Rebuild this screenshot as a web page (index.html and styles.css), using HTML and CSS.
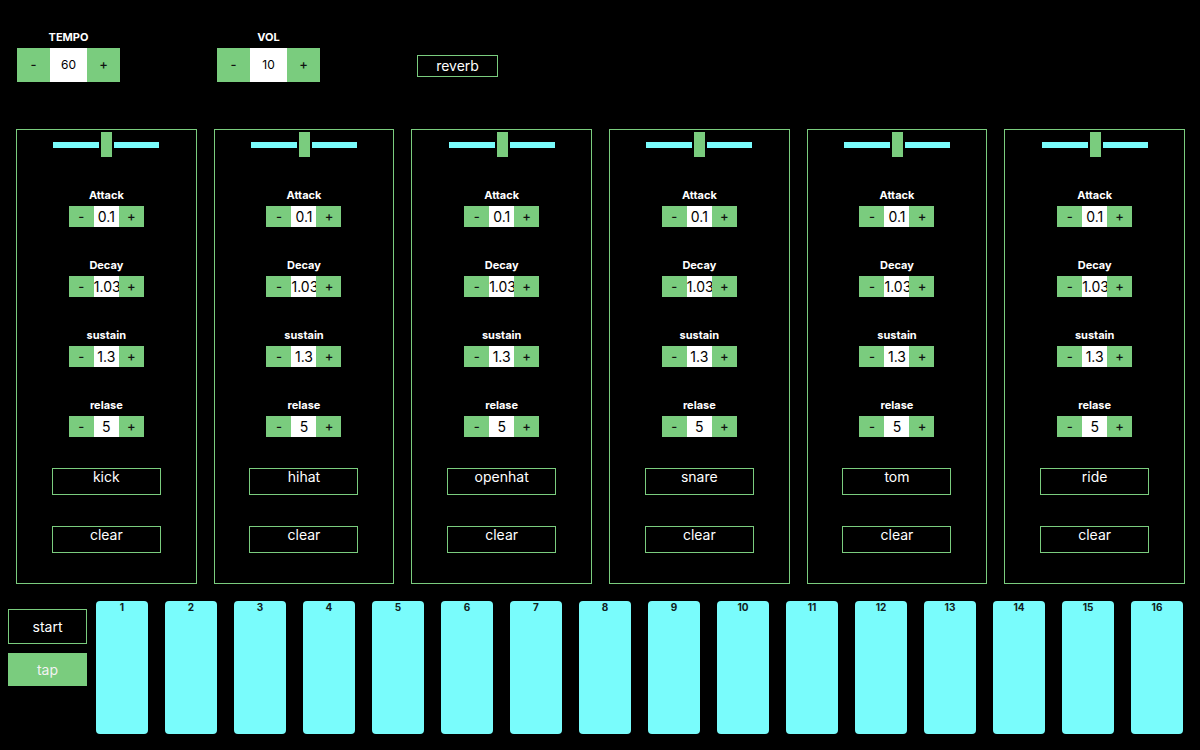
FILE: index.html
```html
<!DOCTYPE html>
<html lang="en">
<head>
	<meta charset="UTF-8">
	<title>Drum Machine</title>
	<link rel="stylesheet" href="styles.css">
</head>

<body>

<div class="master">
	<div class="field">
		<div class="label">TEMPO</div>
		<div class="stepper big">
			<button class="step">-</button>
			<span class="value">60</span>
			<button class="step">+</button>
		</div>
	</div>

	<div class="field">
		<div class="label">VOL</div>
		<div class="stepper big">
			<button class="step">-</button>
			<span class="value">10</span>
			<button class="step">+</button>
		</div>
	</div>

	<button class="outline reverb">reverb</button>
</div>

<div class="channels"></div>

<div class="sequencer">
	<div class="transport">
		<button class="outline start">start</button>
		<button class="tap">tap</button>
	</div>
	<div class="pads"></div>
</div>

<script>
	const channels = document.querySelector('.channels');
	const sounds = ['kick', 'hihat', 'openhat', 'snare', 'tom', 'ride'];
	const envelope = [
		['Attack', '0.1'],
		['Decay', '1.03'],
		['sustain', '1.3'],
		['relase', '5']
	];

	sounds.forEach(sound => {
		const params = envelope.map(([name, value]) => `
			<div class="field">
				<div class="label">${name}</div>
				<div class="stepper">
					<button class="step">-</button>
					<span class="value">${value}</span>
					<button class="step">+</button>
				</div>
			</div>`).join('');

		channels.innerHTML += `
			<div class="channel">
				<div class="slider"><span class="thumb"></span></div>
				${params}
				<button class="outline sound">${sound}</button>
				<button class="outline sound">clear</button>
			</div>`;
	});

	const pads = document.querySelector('.pads');
	for (let i = 1; i <= 16; i++) {
		pads.innerHTML += `<div class="pad">${i}</div>`;
	}
</script>

</body>
</html>
```

FILE: styles.css
```css
:root {
	--green: #7acc7e;
	--cyan: #79fcfc;
}

body {
	margin: 0;
	background: #000;
	color: #fff;
	font-family: 'Inter', 'Liberation Sans', sans-serif;
}

button {
	font-family: inherit;
	cursor: pointer;
}

.master {
	display: flex;
	align-items: flex-start;
	gap: 97px;
	padding: 30px 0 0 17px;
	height: 99px;
	box-sizing: border-box;
}

.field {
	display: flex;
	flex-direction: column;
	align-items: center;
}

.label {
	font-size: 11px;
	font-weight: 700;
	line-height: 14px;
	margin-bottom: 4px;
}

.stepper {
	display: flex;
	height: 21px;
}

.step {
	display: flex;
	align-items: center;
	justify-content: center;
	width: 25px;
	border: none;
	padding: 0 0 2px;
	background: var(--green);
	color: #111;
	font-size: 13px;
	font-weight: 500;
}

.value {
	width: 25px;
	background: #fff;
	color: #000;
	font-size: 14px;
	line-height: 21px;
	text-align: center;
	white-space: nowrap;
}

.stepper.big {
	height: 34px;
}

.big .step {
	width: 33px;
}

.big .value {
	width: 37px;
	font-size: 12px;
	line-height: 34px;
}

.outline {
	background: #000;
	color: #fff;
	border: 1px solid var(--green);
	font-size: 14px;
	padding: 0;
}

.reverb {
	width: 81px;
	height: 22px;
	margin-top: 25px;
	line-height: 20px;
}

/* sound channels */

.channels {
	display: grid;
	grid-template-columns: repeat(6, 1fr);
	gap: 17px;
	padding: 0 15px 0 16px;
	margin-top: 30px;
}

.channel {
	display: flex;
	flex-direction: column;
	align-items: center;
	gap: 31px;
	border: 1px solid var(--green);
	padding: 2px 0 30px;
}

.slider {
	position: relative;
	width: 106px;
	height: 25px;
	display: flex;
	align-items: center;
}

.slider::before {
	content: '';
	width: 100%;
	height: 6px;
	background: var(--cyan);
}

.slider .thumb {
	position: absolute;
	left: 48px;
	top: 0;
	width: 11px;
	height: 25px;
	background: var(--green);
	box-shadow: 0 0 0 2px #000;
}

.sound {
	width: 109px;
	height: 27px;
	line-height: 16px;
	padding-bottom: 9px;
}

/* step sequencer */

.sequencer {
	display: flex;
	gap: 9px;
	padding: 0 17px 0 8px;
	margin-top: 17px;
}

.transport {
	display: flex;
	flex-direction: column;
	gap: 9px;
	padding-top: 8px;
}

.start,
.tap {
	width: 79px;
	height: 35px;
	font-size: 14px;
}

.tap {
	height: 33px;
	border: none;
	background: var(--green);
	color: #f2f2f2;
}

.pads {
	display: flex;
	gap: 17px;
}

.pad {
	width: 52px;
	height: 133px;
	border-radius: 4px;
	background: var(--cyan);
	color: #102020;
	font-size: 10px;
	font-weight: 700;
	line-height: 12px;
	text-align: center;
	box-sizing: border-box;
}
```
